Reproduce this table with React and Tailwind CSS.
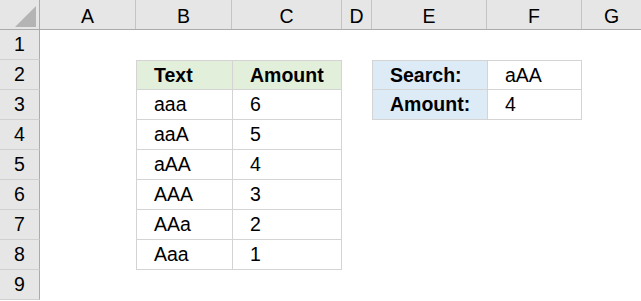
import React from 'react';

const COLS = [
  { key: 'A', w: 'w-[96px]' },
  { key: 'B', w: 'w-[96px]' },
  { key: 'C', w: 'w-[110px]' },
  { key: 'D', w: 'w-[30px]' },
  { key: 'E', w: 'w-[115px]' },
  { key: 'F', w: 'w-[95px]' },
  { key: 'G', w: 'w-[60px]' },
];

const rows = [
  ['aaa', '6'],
  ['aaA', '5'],
  ['aAA', '4'],
  ['AAA', '3'],
  ['AAa', '2'],
  ['Aaa', '1'],
];

// cell content by row number then column letter
const cellFor = (r, c) => {
  const base = 'h-full flex items-center pl-[17px] pt-[1px]';
  const line = 'border-[#d4d4d4]';
  if (c === 'B' || c === 'C') {
    if (r === 2) {
      return (
        <div className={`${base} bg-[#e2efda] font-bold border-t border-b ${line} ${c === 'B' ? 'border-l' : 'border-l border-r'}`}>
          {c === 'B' ? 'Text' : 'Amount'}
        </div>
      );
    }
    if (r >= 3 && r <= 8) {
      const [t, a] = rows[r - 3];
      return (
        <div className={`${base} border-b ${line} ${c === 'B' ? 'border-l' : 'border-l border-r'}`}>
          {c === 'B' ? t : a}
        </div>
      );
    }
  }
  if ((c === 'E' || c === 'F') && (r === 2 || r === 3)) {
    const label = r === 2 ? 'Search:' : 'Amount:';
    const val = r === 2 ? 'aAA' : '4';
    return (
      <div
        className={`${base} border-b ${line} ${r === 2 ? 'border-t' : ''} ${
          c === 'E' ? 'border-l bg-[#ddebf7] font-bold' : 'border-l border-r'
        }`}
      >
        {c === 'E' ? label : val}
      </div>
    );
  }
  return <div className="h-full" />;
};

const App = () => {
  return (
    <div
      className="w-[641px] h-[301px] bg-white overflow-hidden text-[19.5px] text-black"
      style={{ fontFamily: '"Liberation Sans", Arial, sans-serif' }}
    >
      {/* column headers */}
      <div className="flex h-[30px] bg-[#e6e6e6] border-b border-[#ababab]">
        <div className="w-[40px] shrink-0 border-r border-[#ababab] relative">
          <div className="absolute left-[15px] top-[6px] w-0 h-0 border-l-[21px] border-l-transparent border-b-[21px] border-b-[#b4b4b4]" />
        </div>
        {COLS.map((c) => (
          <div
            key={c.key}
            className={`${c.w} shrink-0 border-r border-[#c4c4c4] flex items-center justify-center pt-[5px]`}
          >
            {c.key}
          </div>
        ))}
      </div>

      {/* body rows */}
      {[1, 2, 3, 4, 5, 6, 7, 8, 9].map((r) => (
        <div key={r} className="flex h-[30px]">
          <div className="w-[40px] shrink-0 bg-[#e6e6e6] border-r border-[#ababab] border-b border-b-[#d0d0d0] flex items-center justify-center pt-[1px]">
            {r}
          </div>
          {COLS.map((c) => (
            <div key={c.key} className={`${c.w} shrink-0 h-full`}>
              {cellFor(r, c.key)}
            </div>
          ))}
        </div>
      ))}
    </div>
  );
};

export default App;
